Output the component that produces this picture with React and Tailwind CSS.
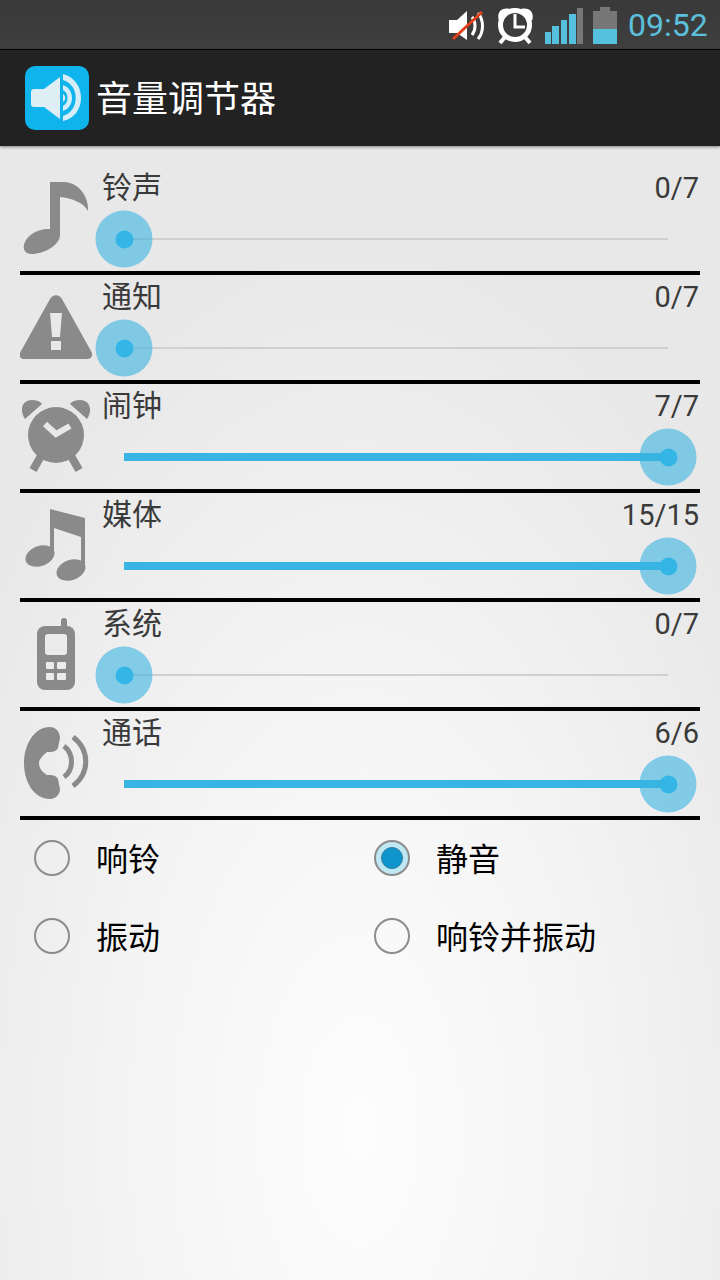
import React from "react";

const rows = [
  { name: "铃声", value: "0/7", percent: 0, top: 166, Icon: NoteIcon },
  { name: "通知", value: "0/7", percent: 0, top: 275, Icon: WarningIcon },
  { name: "闹钟", value: "7/7", percent: 100, top: 384, Icon: AlarmIcon },
  { name: "媒体", value: "15/15", percent: 100, top: 493, Icon: MusicIcon },
  { name: "系统", value: "0/7", percent: 0, top: 602, Icon: PhoneIcon },
  { name: "通话", value: "6/6", percent: 100, top: 711, Icon: CallIcon },
];

const modes = [
  { name: "响铃", checked: false },
  { name: "静音", checked: true },
  { name: "振动", checked: false },
  { name: "响铃并振动", checked: false },
];

// row icons use page coordinates in their viewBox
function NoteIcon() {
  return (
    <path d="M50 182 H64 C78 182 89 196 88 211 C84 203 72 198 60 197 V235 C60 245 44 254 32 254 C24 254 22 248 25 242 C28 234 40 228 50 229 Z" />
  );
}

function WarningIcon() {
  return (
    <>
      <path d="M50 299 C53 294 59 294 62 299 L91 351 C94 356 91 359 86 359 H25 C20 359 18 356 21 351 Z" />
      <path d="M50 313 H62 L60 337 H52 Z M51 341 H61 V350 H51 Z" fill="#e8e8e8" />
    </>
  );
}

function AlarmIcon() {
  return (
    <>
      <circle cx="56" cy="435" r="28" />
      <path d="M25 419 C19 410 22 400 32 400 C36 400 40 401 42 404 Z M87 419 C93 410 90 400 80 400 C76 400 72 401 70 404 Z" />
      <path d="M41 456 L33 470 M71 456 L79 470" stroke="#8a8a8a" strokeWidth="8" fill="none" />
      <path d="M45 424 L56 434 L70 426" stroke="#e8e8e8" strokeWidth="6" fill="none" />
    </>
  );
}

function MusicIcon() {
  return (
    <>
      <path d="M50 509 L85 518 V565 H81 V537 L54 528 V555 H50 Z" />
      <ellipse cx="40" cy="556" rx="15" ry="10" transform="rotate(-20 40 556)" />
      <ellipse cx="71" cy="570" rx="15" ry="10" transform="rotate(-20 71 570)" />
    </>
  );
}

function PhoneIcon() {
  return (
    <>
      <rect x="61" y="618" width="6" height="12" rx="3" />
      <rect x="37" y="626" width="38" height="64" rx="8" />
      <g fill="#ebebeb">
        <rect x="45" y="634" width="22" height="21" rx="3" />
        <rect x="46" y="662" width="8" height="7" rx="1" />
        <rect x="57" y="662" width="9" height="7" rx="1" />
        <rect x="46" y="673" width="8" height="7" rx="1" />
        <rect x="57" y="673" width="9" height="7" rx="1" />
      </g>
    </>
  );
}

function CallIcon() {
  return (
    <>
      <path d="M50 727 C56 727 60 732 60 738 L58 748 C56 752 52 752 47 752 C42 756 39 760 39 763 C39 768 42 772 47 775 C52 775 56 775 58 779 L60 789 C60 795 55 799 50 799 C34 799 24 782 24 763 C24 745 34 727 50 727 Z" />
      <path d="M64 746 C74 754 74 770 64 777 M73 737 C90 750 90 773 73 786" stroke="#8a8a8a" strokeWidth="5" fill="none" />
    </>
  );
}

const Slider = ({ percent }) => (
  <div className="relative ml-[28px] mr-[32px] h-[8px] flex items-center">
    {percent > 0 ? (
      <div className="h-[8px] w-full bg-[#39b4e3]" />
    ) : (
      <div className="h-[2px] w-full bg-[#d0d0d0]" />
    )}
    <div
      className="absolute top-1/2 -translate-x-1/2 -translate-y-1/2 w-[57px] h-[57px] rounded-full bg-[#39b4e3]/60 flex items-center justify-center"
      style={{ left: `${percent}%` }}
    >
      <div className="w-[18px] h-[18px] rounded-full bg-[#33b5e5]" />
    </div>
  </div>
);

const Row = ({ row }) => {
  const Icon = row.Icon;
  return (
    <div className="flex h-[105px]">
      <svg
        className="w-[76px] h-[105px] shrink-0"
        viewBox={`20 ${row.top} 76 105`}
        fill="#8a8a8a"
      >
        <Icon />
      </svg>
      <div className="flex-1 flex flex-col">
        <div className="flex justify-between items-center h-[44px] pl-[6px] text-[30px] leading-[44px] text-[#3a3a3a]">
          <span>{row.name}</span>
          <span className="text-[29px] pr-px">{row.value}</span>
        </div>
        <div className="mt-[25px]">
          <Slider percent={row.percent} />
        </div>
      </div>
    </div>
  );
};

const Radio = ({ checked }) => (
  <div
    className={`w-[36px] h-[36px] rounded-full border-2 border-[#8c8c8c] flex items-center justify-center ${
      checked ? "bg-[#bfe6f3]" : ""
    }`}
  >
    {checked && (
      <div className="w-[22px] h-[22px] rounded-full bg-[#0f94cc] border border-[#2a7fa8]" />
    )}
  </div>
);

const StatusBar = () => (
  <div className="h-[50px] flex justify-end items-center pr-[12px] bg-gradient-to-b from-[#393939] to-[#3f3f3f] border-b border-black">
    <svg className="w-[38px] h-[49px]" viewBox="449 0 38 49">
      <path d="M449 20 H457 L467 11 V40 L457 33 H449 Z" fill="#fff" />
      <path d="M472 17 C476 22 476 30 472 35 M478 13 C484 20 484 32 478 39" stroke="#fff" strokeWidth="3" fill="none" />
      <path d="M453 39 L482 12" stroke="#e0401a" strokeWidth="3" />
    </svg>
    <svg className="w-[38px] h-[49px] ml-[10px]" viewBox="497 0 38 49">
      <circle cx="515" cy="25" r="14.5" stroke="#fff" strokeWidth="5" fill="none" />
      <path d="M515 14 V27 H525" stroke="#fff" strokeWidth="3" fill="none" />
      <path d="M499 21 C496 12 502 7 510 9 Z M532 21 C535 12 529 7 521 9 Z" fill="#fff" />
      <path d="M505 37 L500 43 M525 37 L530 43" stroke="#fff" strokeWidth="4" />
    </svg>
    <svg className="w-[38px] h-[49px] ml-[10px]" viewBox="545 0 38 49">
      <rect x="545" y="32" width="6" height="12" fill="#55c0de" />
      <rect x="552" y="26" width="7" height="18" fill="#55c0de" />
      <rect x="561" y="20" width="6" height="24" fill="#55c0de" />
      <rect x="569" y="14" width="7" height="30" fill="#55c0de" />
      <rect x="577" y="8" width="6" height="36" fill="#777777" />
    </svg>
    <svg className="w-[24px] h-[49px] ml-[10px]" viewBox="593 0 24 49">
      <rect x="600" y="7" width="10" height="4" fill="#777777" />
      <rect x="593" y="11" width="24" height="18" fill="#777777" />
      <rect x="593" y="29" width="24" height="15" fill="#55c0de" />
    </svg>
    <span className="ml-[11px] mt-[2px] w-[80px] text-[32px] leading-[47px] text-[#5cc0dc] whitespace-nowrap">
      09:52
    </span>
  </div>
);

const ActionBar = () => (
  <div className="relative h-[96px] flex items-center pl-[25px] bg-[#222222] shadow-[0_1px_3px_rgba(0,0,0,0.45)]">
    <svg className="w-[64px] h-[64px]" viewBox="0 0 64 64">
      <rect width="64" height="64" rx="10" fill="#10b4ec" />
      <path d="M6 26 C6 24 7 23 9 23 H19 L35 11 V53 L19 41 H9 C7 41 6 40 6 38 Z" fill="#dfeef4" />
      <path d="M38 8 C62 14 62 50 38 55 V50 C55 45 55 19 38 14 Z M38 19 C50 23 50 41 38 45 V40 C44 37 44 27 38 24 Z M38 28 C41 30 41 34 38 36 Z" fill="#d5edf6" />
    </svg>
    <span className="ml-[7px] mt-[4px] text-[36px] text-white leading-[92px]">音量调节器</span>
  </div>
);

const App = () => {
  return (
    <div className="min-h-screen font-['Roboto','Noto_Sans_CJK_SC',sans-serif] bg-[radial-gradient(ellipse_470px_900px_at_50%_1130px,#fdfdfd_0%,#f4f4f4_50%,#e8e8e8_100%)]">
      <StatusBar />
      <ActionBar />
      <div className="px-[20px] pt-[20px]">
        {rows.map((row) => (
          <div key={row.name} className="border-b-4 border-black">
            <Row row={row} />
          </div>
        ))}
        <div className="grid grid-cols-2 -mt-px">
          {modes.map((mode) => (
            <div key={mode.name} className="h-[78px] flex items-center pl-[14px]">
              <Radio checked={mode.checked} />
              <span className="ml-[26px] mt-[4px] text-[32px] text-black">{mode.name}</span>
            </div>
          ))}
        </div>
      </div>
    </div>
  );
};

export default App;
